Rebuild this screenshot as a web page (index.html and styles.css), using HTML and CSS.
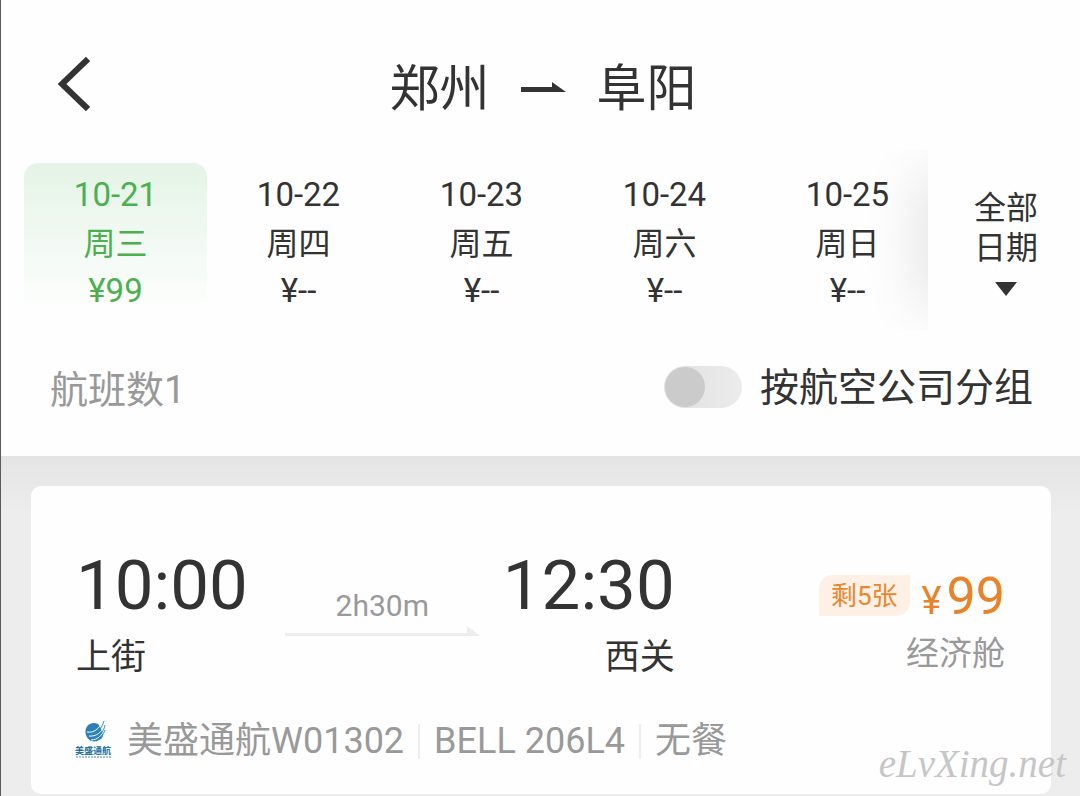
FILE: index.html
```html
<!DOCTYPE html>
<html lang="zh-CN">
<head>
    <meta charset="UTF-8">
    <meta name="viewport" content="width=device-width, initial-scale=1.0">
    <title>郑州 - 阜阳</title>
    <link rel="stylesheet" href="styles.css">
</head>
<body>
    <header class="header">
        <div class="title-bar">
            <button class="back" type="button" aria-label="返回">
                <svg width="34" height="56" viewBox="0 0 34 56">
                    <path d="M32 3 L6 28 L32 53" fill="none" stroke="#333" stroke-width="6"/>
                </svg>
            </button>
            <h1 class="route">
                <span>郑州</span>
                <svg width="45" height="12" viewBox="0 0 45 12">
                    <path d="M0 5 H31 V0 L45 10 H0 Z" fill="#333"/>
                </svg>
                <span>阜阳</span>
            </h1>
        </div>

        <div class="date-bar">
            <div class="dates">
                <button class="date active" type="button">
                    <span>10-21</span>
                    <span class="week">周三</span>
                    <span>¥99</span>
                </button>
                <button class="date" type="button">
                    <span>10-22</span>
                    <span class="week">周四</span>
                    <span>¥--</span>
                </button>
                <button class="date" type="button">
                    <span>10-23</span>
                    <span class="week">周五</span>
                    <span>¥--</span>
                </button>
                <button class="date" type="button">
                    <span>10-24</span>
                    <span class="week">周六</span>
                    <span>¥--</span>
                </button>
                <button class="date" type="button">
                    <span>10-25</span>
                    <span class="week">周日</span>
                    <span>¥--</span>
                </button>
            </div>
            <button class="all-dates" type="button">
                <span>全部</span>
                <span>日期</span>
                <svg width="22" height="14" viewBox="0 0 22 14">
                    <path d="M0 0 H22 L11 14 Z" fill="#333"/>
                </svg>
            </button>
        </div>

        <div class="filter-bar">
            <span class="count">航班数1</span>
            <label class="group" for="groupByAirline">
                <input class="switch" type="checkbox" id="groupByAirline">
                <span>按航空公司分组</span>
            </label>
        </div>
    </header>

    <main class="list">
        <article class="card">
            <div class="summary">
                <div class="point">
                    <div class="time">10:00</div>
                    <div class="place">上街</div>
                </div>
                <div class="duration">
                    <span>2h30m</span>
                    <svg width="195" height="10" viewBox="0 0 195 10">
                        <path d="M0 7 H182 V0 L195 10 H0 Z" fill="#ededed"/>
                    </svg>
                </div>
                <div class="point arrive">
                    <div class="time">12:30</div>
                    <div class="place">西关</div>
                </div>
                <div class="fare">
                    <div class="fare-row">
                        <span class="left-seats">剩5张</span>
                        <span class="price"><span class="currency">¥</span>99</span>
                    </div>
                    <div class="cabin">经济舱</div>
                </div>
            </div>

            <div class="detail">
                <svg class="logo" width="40" height="40" viewBox="0 0 40 40">
                    <path d="M12 14 C10 7 14 2 20 2 C23 2 24 3 25 4 L29 12 C29 16 28 18 25 19 C20 22 14 20 12 14 Z" fill="#2a7fb8"/>
                    <path d="M13 11 C20 12 25 8 28 1 M15 15 C22 16 28 11 31 4 M17 19 C24 19 28 14 31 8" fill="none" stroke="#fff" stroke-width="1"/>
                    <path d="M17 13 C24 12 28 7 30 0 M19 17 C26 15 30 10 31 4 M22 20 C27 18 29 14 31 9" fill="none" stroke="#2f8fc8" stroke-width="1"/>
                    <text x="1" y="33" class="logo-name">美盛通航</text>
                    <path d="M2 36 H38" stroke="#4c8daf" stroke-width="1" stroke-dasharray="2 1"/>
                </svg>
                <span class="item">美盛通航W01302</span>
                <span class="item">BELL 206L4</span>
                <span class="item">无餐</span>
            </div>
        </article>
    </main>

    <div class="watermark">eLvXing.net</div>
</body>
</html>
```

FILE: styles.css
```css
* {
    box-sizing: border-box;
}

body {
    position: relative;
    min-height: 100vh;
    margin: 0;
    border-left: 1px solid #5a5a5a;
    background: #ededed;
    color: #333;
    font-family: Roboto, "Noto Sans CJK SC", sans-serif;
}

button {
    margin: 0;
    padding: 0;
    border: none;
    background: none;
    color: inherit;
    font-family: inherit;
    cursor: pointer;
}

svg {
    display: block;
}

.header {
    background: #fefefe;
}

/* title */
.title-bar {
    display: grid;
    grid-template-columns: 1fr auto 1fr;
    align-items: start;
    height: 150px;
    padding: 56px 50px 0 55px;
}

.back {
    justify-self: start;
}

.route {
    display: flex;
    align-items: center;
    gap: 31px;
    margin: 0;
    font-size: 50px;
    font-weight: 400;
    line-height: 60px;
}

.route span {
    padding-top: 3px;
}

/* dates */
.date-bar {
    display: flex;
    height: 180px;
}

.dates {
    position: relative;
    display: flex;
    flex: 1;
    min-width: 0;
    padding: 13px 0 0 23px;
    overflow: hidden;
}

/* fade at the scrolling edge */
.dates::after {
    content: "";
    position: absolute;
    top: 30px;
    right: -50px;
    width: 50px;
    height: 120px;
    box-shadow: 0 0 60px 6px rgba(0, 0, 0, 0.12);
    pointer-events: none;
}

.date {
    display: flex;
    flex: 0 0 183px;
    flex-direction: column;
    align-items: center;
    height: 150px;
    padding-top: 8px;
    border-radius: 14px 14px 0 0;
    font-size: 33px;
    line-height: 47px;
}

.date.active {
    background: linear-gradient(#e4f4e6, #fefefe);
    color: #4caf50;
}

.week {
    padding-top: 4px;
    font-size: 32px;
    line-height: 45px;
}

.all-dates {
    display: flex;
    flex: 0 0 152px;
    flex-direction: column;
    align-items: center;
    justify-content: center;
    padding: 4px 0 0 4px;
    font-size: 32px;
    line-height: 40px;
}

.all-dates svg {
    margin-top: 14px;
}

/* filter */
.filter-bar {
    display: flex;
    align-items: center;
    justify-content: space-between;
    height: 126px;
    padding: 0 47px 12px 49px;
    font-size: 39px;
    line-height: 52px;
}

.count {
    padding-top: 6px;
    color: #999;
    font-size: 38px;
}

.group {
    display: flex;
    align-items: center;
    gap: 18px;
}

.group span {
    padding-top: 2px;
}

.switch {
    width: 78px;
    height: 42px;
    margin: 0;
    padding: 1px;
    border-radius: 21px;
    background: linear-gradient(to right, #e0e0e0, #ececec);
    appearance: none;
}

.switch::before {
    content: "";
    display: block;
    width: 40px;
    height: 40px;
    border-radius: 50%;
    background: #cbcbcb;
}

.switch:checked::before {
    margin-left: auto;
}

/* flights */
.list {
    padding: 30px 29px 2px 30px;
    background: linear-gradient(#e4e4e4, #ededed 60px);
}

.card {
    padding: 64px 46px 31px 45px;
    border-radius: 10px;
    background: #fefefe;
}

.summary {
    display: flex;
}

.time {
    font-size: 69px;
    line-height: 72px;
}

.place {
    margin-top: 16px;
    font-size: 35px;
    line-height: 40px;
}

.arrive {
    text-align: right;
}

.duration {
    display: flex;
    flex-direction: column;
    align-items: center;
    margin: 0 23px 0 37px;
    padding-top: 36px;
    color: #999;
    font-size: 30px;
    line-height: 40px;
}

.fare {
    flex: 1;
    padding-top: 20px;
    text-align: right;
}

.fare-row {
    display: flex;
    align-items: flex-start;
    justify-content: flex-end;
    gap: 12px;
}

.left-seats {
    margin-top: 5px;
    padding: 1px 12px 0 12px;
    border-radius: 14px 0 14px 0;
    background: #fff0e6;
    color: #e8872f;
    font-size: 26px;
    line-height: 40px;
}

.price {
    color: #e8832a;
    font-size: 52px;
    line-height: 54px;
}

.currency {
    margin-right: 5px;
    font-size: 38px;
}

.cabin {
    margin-top: 6px;
    color: #999;
    font-size: 33px;
    line-height: 40px;
}

.detail {
    display: flex;
    align-items: center;
    margin-top: 41px;
    color: #999;
    font-size: 36px;
    line-height: 44px;
}

.logo {
    margin: 0 13px 0 -2px;
}

.logo-name {
    fill: #236f9f;
    font-size: 9px;
    font-weight: 700;
}

.item + .item {
    display: flex;
    align-items: center;
}

.item + .item::before {
    content: "";
    width: 2px;
    height: 35px;
    margin: 0 14px;
    background: #eee;
}

.watermark {
    position: absolute;
    right: 14px;
    bottom: 12px;
    color: #c6c6c6;
    font-family: "Liberation Serif", serif;
    font-size: 39px;
    font-style: italic;
    line-height: 40px;
}
```
